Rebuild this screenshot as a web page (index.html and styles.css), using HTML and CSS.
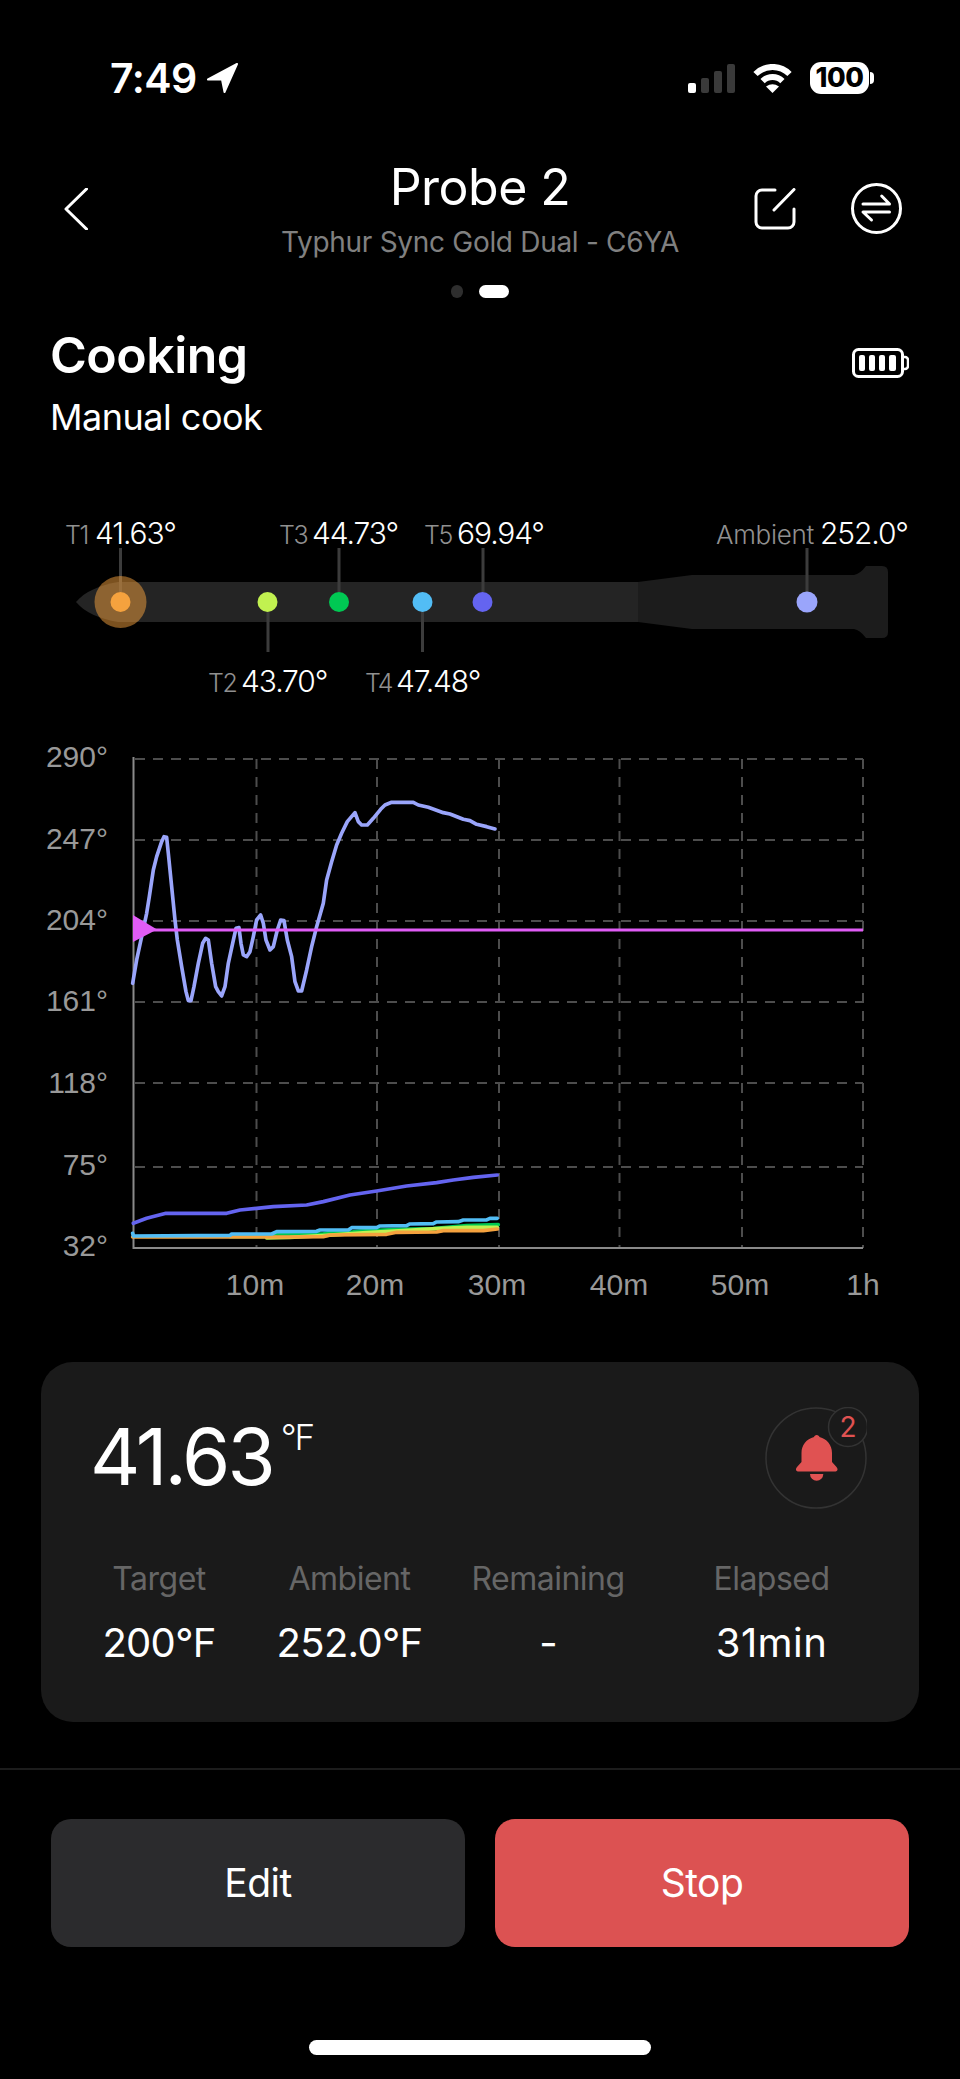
FILE: index.html
```html
<!DOCTYPE html>
<html lang="en">
<head>
    <meta charset="UTF-8">
    <title>Probe 2</title>
    <link rel="stylesheet" href="styles.css">
</head>
<body>
    <div class="screen">
        <!-- Status bar -->
        <div class="status-bar">
            <div class="status-left">
                <span class="clock">7:49</span>
                <svg class="location" viewBox="0 0 31 30"><path d="M30 1 L1 16.5 H15 L17.5 29 Z" fill="#fff" stroke="#fff" stroke-width="2" stroke-linejoin="round"/></svg>
            </div>
            <div class="status-right">
                <div class="signal">
                    <span class="bar bar-1"></span>
                    <span class="bar bar-2"></span>
                    <span class="bar bar-3"></span>
                    <span class="bar bar-4"></span>
                </div>
                <svg class="wifi" viewBox="0 0 41 29">
                    <path d="M3.5 10 A24 24 0 0 1 37.5 10" fill="none" stroke="#fff" stroke-width="6"/>
                    <path d="M10.6 17.1 A14 14 0 0 1 30.4 17.1" fill="none" stroke="#fff" stroke-width="6"/>
                    <path d="M20.5 29 L14 22.5 Q20.5 18 27 22.5 Z" fill="#fff"/>
                </svg>
                <div class="batt">100</div>
            </div>
        </div>

        <!-- Header -->
        <div class="header">
            <svg class="back" viewBox="0 0 24 42"><path d="M22.5 1 L2 21 L22.5 41" fill="none" stroke="#fff" stroke-width="3" stroke-linecap="round" stroke-linejoin="round"/></svg>
            <div class="header-title">
                <div class="title">Probe 2</div>
                <div class="subtitle">Typhur Sync Gold Dual - C6YA</div>
            </div>
            <div class="header-actions">
                <svg class="edit" viewBox="0 0 42 42">
                    <path d="M21 2 H8 A6 6 0 0 0 2 8 V34 A6 6 0 0 0 8 40 H34 A6 6 0 0 0 40 34 V21" fill="none" stroke="#fff" stroke-width="3" stroke-linecap="round"/>
                    <path d="M20 22 L40 1.5" fill="none" stroke="#fff" stroke-width="3" stroke-linecap="round"/>
                </svg>
                <svg class="swap" viewBox="0 0 51 51">
                    <circle cx="25.5" cy="25.5" r="24" fill="none" stroke="#fff" stroke-width="3"/>
                    <path d="M12 21 H38.5 L30.7 13" fill="none" stroke="#fff" stroke-width="3" stroke-linecap="round" stroke-linejoin="round"/>
                    <path d="M38.5 29 H12 L20.5 37" fill="none" stroke="#fff" stroke-width="3" stroke-linecap="round" stroke-linejoin="round"/>
                </svg>
            </div>
        </div>

        <div class="pager">
            <span class="pager-dot"></span>
            <span class="pager-dot active"></span>
        </div>

        <!-- Cook state -->
        <div class="state">
            <div>
                <div class="state-title">Cooking</div>
                <div class="state-sub">Manual cook</div>
            </div>
            <svg class="probe-battery" viewBox="0 0 57 30">
                <rect x="1.5" y="1.5" width="49" height="27" rx="5" fill="none" stroke="#fff" stroke-width="3"/>
                <path d="M50 9 h3 a3 3 0 0 1 3 3 v6 a3 3 0 0 1 -3 3 h-3" fill="none" stroke="#fff" stroke-width="2.5"/>
                <rect x="7" y="7" width="6" height="16" rx="2" fill="#fff"/>
                <rect x="17" y="7" width="6" height="16" rx="2" fill="#fff"/>
                <rect x="27" y="7" width="6" height="16" rx="2" fill="#fff"/>
                <rect x="37" y="7" width="7" height="16" rx="2" fill="#fff"/>
            </svg>
        </div>

        <!-- Probe diagram -->
        <svg class="probe" viewBox="0 500 960 220">
            <path class="probe-handle" d="M638 582 L692 575 H854 Q860 574 866 566 H882 Q888 566 888 572 V632 Q888 638 882 638 H866 Q860 630 854 629 H692 L638 622 Z"/>
            <path class="probe-shaft" d="M76 602 C84 592 100 585 118 582 H638 V622 H118 C100 619 84 612 76 602 Z"/>

            <line class="lead" x1="120.5" y1="548" x2="120.5" y2="592"/>
            <line class="lead" x1="268" y1="610" x2="268" y2="652"/>
            <line class="lead" x1="339" y1="548" x2="339" y2="592"/>
            <line class="lead" x1="422.5" y1="610" x2="422.5" y2="652"/>
            <line class="lead" x1="483" y1="548" x2="483" y2="592"/>
            <line class="lead" x1="807" y1="548" x2="807" y2="592"/>

            <circle class="halo" cx="120.5" cy="602" r="26"/>
            <circle cx="120.5" cy="602" r="10" fill="#f5a23e"/>
            <circle cx="267.5" cy="602" r="10" fill="#c1f150"/>
            <circle cx="339" cy="602" r="10" fill="#00c853"/>
            <circle cx="422.5" cy="602" r="10" fill="#52bdf5"/>
            <circle cx="482.5" cy="602" r="10" fill="#6464f0"/>
            <circle cx="807" cy="602" r="10.5" fill="#9aa5fb"/>

            <text y="544"><tspan class="probe-name" x="65">T1</tspan><tspan class="probe-val" x="95">41.63°</tspan></text>
            <text y="544"><tspan class="probe-name" x="279">T3</tspan><tspan class="probe-val" x="312">44.73°</tspan></text>
            <text y="544"><tspan class="probe-name" x="424">T5</tspan><tspan class="probe-val" x="457">69.94°</tspan></text>
            <text y="544"><tspan class="probe-name wide" x="716">Ambient</tspan><tspan class="probe-val" x="820">252.0°</tspan></text>
            <text y="692"><tspan class="probe-name" x="208">T2</tspan><tspan class="probe-val" x="241">43.70°</tspan></text>
            <text y="692"><tspan class="probe-name" x="365">T4</tspan><tspan class="probe-val" x="396">47.48°</tspan></text>
        </svg>

        <!-- Temperature chart -->
        <svg class="chart" viewBox="0 730 960 580">
            <g class="grid">
                <line x1="135" y1="759" x2="863" y2="759"/>
                <line x1="135" y1="840" x2="863" y2="840"/>
                <line x1="135" y1="921" x2="863" y2="921"/>
                <line x1="135" y1="1002" x2="863" y2="1002"/>
                <line x1="135" y1="1083" x2="863" y2="1083"/>
                <line x1="135" y1="1167" x2="863" y2="1167"/>
                <line x1="256.5" y1="759" x2="256.5" y2="1248"/>
                <line x1="377" y1="759" x2="377" y2="1248"/>
                <line x1="499" y1="759" x2="499" y2="1248"/>
                <line x1="619.5" y1="759" x2="619.5" y2="1248"/>
                <line x1="742" y1="759" x2="742" y2="1248"/>
                <line x1="863" y1="759" x2="863" y2="1248"/>
            </g>
            <path class="axis" d="M133.5 757 V1248 H863"/>

            <g class="ytick">
                <text x="108" y="767">290°</text>
                <text x="108" y="849">247°</text>
                <text x="108" y="930">204°</text>
                <text x="108" y="1011">161°</text>
                <text x="108" y="1093">118°</text>
                <text x="108" y="1175">75°</text>
                <text x="108" y="1256">32°</text>
            </g>
            <g class="xtick">
                <text x="255" y="1295">10m</text>
                <text x="375" y="1295">20m</text>
                <text x="497" y="1295">30m</text>
                <text x="619" y="1295">40m</text>
                <text x="740" y="1295">50m</text>
                <text x="863" y="1295">1h</text>
            </g>

            <g transform="translate(40 730) scale(0.3333)">
                <polyline class="curve ambient" points="278,760 290,690 305,620 320,550 328,500 340,420 350,380 365,335 372,320 380,322 385,370 395,470 405,570 412,630 425,710 438,785 445,812 453,812 462,770 475,700 488,640 497,625 505,630 515,700 527,770 535,785 545,798 555,770 565,700 578,640 588,595 597,593 603,640 610,675 620,680 630,665 640,620 650,570 662,555 670,580 678,630 690,660 700,650 712,600 722,570 732,572 742,630 755,680 765,755 775,783 785,783 800,720 815,650 830,590 850,520 860,450 875,395 890,345 905,310 922,275 945,248 955,275 965,285 982,285 1000,265 1022,238 1035,225 1055,217 1120,217 1135,225 1165,232 1210,248 1230,252 1270,268 1290,272 1310,283 1340,290 1365,297"/>
            </g>
            <g transform="translate(40 1030) scale(0.3333)">
                <polyline class="curve t5" points="280,580 320,565 378,550 560,550 600,540 650,535 700,530 800,525 850,515 930,495 1010,483 1100,468 1190,458 1240,450 1300,442 1372,435"/>
                <polyline class="curve t3" points="570,620 680,620 710,612 850,612 870,607 930,607 960,603 1080,598 1180,596 1280,587 1375,584"/>
                <polyline class="curve t2" points="680,624 750,622 860,616 980,608 1090,602 1190,596 1280,592 1372,592"/>
                <polyline class="curve t1" points="278,621 750,621 850,620 870,615 1040,613 1070,607 1190,606 1210,602 1330,602 1372,597"/>
                <polyline class="curve t4" points="278,610 280,618 570,616 575,612 695,612 710,605 830,604 840,600 925,600 935,593 1010,593 1020,588 1100,587 1110,582 1180,581 1190,576 1255,575 1270,570 1340,570 1350,565 1372,565"/>
            </g>

            <line class="target-line" x1="133" y1="930" x2="863" y2="930"/>
            <polygon class="target-mark" points="133,915 157,929.5 133,942"/>
        </svg>

        <!-- Reading card -->
        <div class="card">
            <div class="card-top">
                <div class="reading">
                    <span class="reading-value">41.63</span>
                    <span class="reading-unit">°F</span>
                </div>
                <svg class="alarm" viewBox="0 0 102 102">
                    <circle cx="51" cy="51" r="50" fill="none" stroke="#333" stroke-width="1.5"/>
                    <path d="M51.7 28 c1.5 0 2.5 1 2.8 2 C62 32 67 38 67 46 V55 L71.5 60 c2 2.5 1 4.5 -2 4.5 H34 c-3 0 -4 -2 -2 -4.5 L36.5 55 V46 C36.5 38 41.5 32 49 30 c0.3 -1 1.2 -2 2.7 -2 Z" fill="#e05252"/>
                    <path d="M45 67 h13.3 a6.65 6.65 0 0 1 -13.3 0 Z" fill="#e05252"/>
                    <circle cx="83" cy="20" r="19.5" fill="#1a1a1a" stroke="#333" stroke-width="1.5"/>
                    <text class="alarm-count" x="83" y="30">2</text>
                </svg>
            </div>
            <div class="stats">
                <div class="stat">
                    <div class="stat-label">Target</div>
                    <div class="stat-value">200°F</div>
                </div>
                <div class="stat">
                    <div class="stat-label">Ambient</div>
                    <div class="stat-value">252.0°F</div>
                </div>
                <div class="stat">
                    <div class="stat-label">Remaining</div>
                    <div class="stat-value">-</div>
                </div>
                <div class="stat">
                    <div class="stat-label">Elapsed</div>
                    <div class="stat-value stat-time">31min</div>
                </div>
            </div>
        </div>

        <!-- Actions -->
        <div class="actions">
            <button class="btn btn-edit">Edit</button>
            <button class="btn btn-stop">Stop</button>
        </div>

        <div class="home-indicator"></div>
    </div>
</body>
</html>
```

FILE: styles.css
```css
* {
    box-sizing: border-box;
}

body {
    margin: 0;
    background: #000;
    color: #fff;
    font-family: Inter, "Liberation Sans", sans-serif;
}

svg {
    display: block;
}

.screen {
    width: 960px;
    height: 2079px;
    overflow: hidden;
    display: flex;
    flex-direction: column;
}

/* status bar */
.status-bar {
    height: 156px;
    padding: 0 84px 0 110px;
    display: flex;
    justify-content: space-between;
    align-items: center;
}

.status-left,
.status-right {
    display: flex;
    align-items: center;
}

.clock {
    font-size: 41px;
    font-weight: 600;
    letter-spacing: -0.5px;
    line-height: 48px;
}

.location {
    width: 31px;
    height: 30px;
    margin-left: 10px;
}

.signal {
    display: flex;
    align-items: flex-end;
    gap: 5px;
    height: 29px;
}

.bar {
    width: 8px;
    border-radius: 2px;
    background: #3a3a3a;
}

.bar-1 {
    height: 10px;
    background: #fff;
}

.bar-2 {
    height: 15px;
}

.bar-3 {
    height: 22px;
}

.bar-4 {
    height: 29px;
}

.wifi {
    width: 41px;
    height: 29px;
    margin-left: 17px;
}

.batt {
    position: relative;
    width: 59px;
    height: 32px;
    margin-left: 17px;
    margin-right: 7px;
    border-radius: 11px;
    background: #fff;
    color: #000;
    font-size: 27px;
    font-weight: 800;
    line-height: 32px;
    text-align: center;
    letter-spacing: -0.5px;
}

.batt::after {
    content: "";
    position: absolute;
    top: 10px;
    right: -5px;
    width: 4px;
    height: 12px;
    border-radius: 0 4px 4px 0;
    background: #fff;
}

/* header */
.header {
    height: 101px;
    margin-top: 2px;
    padding: 0 58px;
    display: grid;
    grid-template-columns: 1fr auto 1fr;
    align-items: center;
}

.back {
    width: 24px;
    height: 42px;
    margin-left: 6px;
}

.header-title {
    text-align: center;
}

.title {
    font-size: 50px;
    font-weight: 400;
    line-height: 58px;
    letter-spacing: -0.5px;
}

.subtitle {
    margin-top: 10px;
    font-size: 28px;
    line-height: 33px;
    color: #808080;
    letter-spacing: -0.3px;
}

.header-actions {
    display: flex;
    justify-content: flex-end;
    align-items: center;
    gap: 55px;
}

.edit {
    width: 42px;
    height: 42px;
}

.swap {
    width: 51px;
    height: 51px;
}

.pager {
    margin-top: 26px;
    display: flex;
    justify-content: center;
    gap: 16px;
}

.pager-dot {
    width: 12px;
    height: 13px;
    border-radius: 7px;
    background: #2e2e2e;
}

.pager-dot.active {
    width: 30px;
    background: #fff;
}

/* cook state */
.state {
    margin-top: 27px;
    padding: 0 51px 0 50px;
    display: flex;
    justify-content: space-between;
    align-items: flex-start;
}

.state-title {
    font-size: 50px;
    font-weight: 600;
    line-height: 60px;
    letter-spacing: -0.5px;
}

.state-sub {
    margin-top: 10px;
    font-size: 36px;
    line-height: 44px;
    letter-spacing: -0.5px;
}

.probe-battery {
    width: 57px;
    height: 30px;
    margin-top: 23px;
}

/* probe diagram */
.probe {
    position: absolute;
    top: 500px;
    left: 0;
    width: 960px;
    height: 220px;
}

.probe-handle {
    fill: #1c1c1c;
}

.probe-shaft {
    fill: #242424;
}

.lead {
    stroke: #3c3c3c;
    stroke-width: 3;
}

.halo {
    fill: #f5a23e;
    opacity: 0.5;
}

.probe-name {
    font-size: 25px;
    font-weight: 300;
    fill: #909090;
    letter-spacing: -1.5px;
}

.probe-name.wide {
    font-size: 26px;
    letter-spacing: -0.3px;
}

.probe-val {
    font-size: 30px;
    font-weight: 300;
    fill: #fff;
    letter-spacing: -1.1px;
}

/* chart */
.chart {
    position: absolute;
    top: 730px;
    left: 0;
    width: 960px;
    height: 580px;
}

.grid line {
    stroke: #4d4d4d;
    stroke-width: 2;
    stroke-dasharray: 10 8;
}

.axis {
    fill: none;
    stroke: #8a8a8a;
    stroke-width: 2;
}

.ytick text {
    font-family: "Liberation Sans", sans-serif;
    font-size: 30px;
    fill: #999;
    text-anchor: end;
}

.xtick text {
    font-family: "Liberation Sans", sans-serif;
    font-size: 30px;
    fill: #999;
    text-anchor: middle;
}

.curve {
    fill: none;
    stroke-width: 11;
    stroke-linejoin: round;
    stroke-linecap: round;
}

.ambient {
    stroke: #9aa5fb;
}

.t1 {
    stroke: #f5a23e;
}

.t2 {
    stroke: #c1f150;
}

.t3 {
    stroke: #00c853;
}

.t4 {
    stroke: #52bdf5;
}

.t5 {
    stroke: #6464f0;
}

.target-line {
    stroke: #e05cf5;
    stroke-width: 3;
}

.target-mark {
    fill: #e05cf5;
}

/* reading card */
.card {
    position: absolute;
    top: 1362px;
    left: 41px;
    width: 878px;
    height: 360px;
    padding: 45px 20px 0 49px;
    border-radius: 32px;
    background: #1a1a1a;
}

.card-top {
    padding-right: 32px;
    display: flex;
    justify-content: space-between;
    align-items: flex-start;
}

.reading {
    display: flex;
    align-items: flex-start;
}

.reading-value {
    font-size: 78px;
    line-height: 100px;
    letter-spacing: -3px;
}

.reading-unit {
    margin-left: 8px;
    font-size: 35px;
    font-weight: 300;
    line-height: 60px;
    letter-spacing: -2px;
}

.alarm {
    width: 102px;
    height: 102px;
}

.alarm-count {
    font-size: 28px;
    fill: #e05252;
    text-anchor: middle;
}

.stats {
    margin-top: 50px;
    margin-left: -7.5px;
    display: grid;
    grid-template-columns: 153px 180px 169px 230px;
    column-gap: 24px;
    text-align: center;
}

.stat-label {
    font-size: 32px;
    line-height: 40px;
    color: #666;
    letter-spacing: -0.5px;
    white-space: nowrap;
}

.stat-value {
    margin-top: 21px;
    font-size: 40px;
    line-height: 46px;
    letter-spacing: -0.7px;
    white-space: nowrap;
}

.stat-time {
    letter-spacing: 0.4px;
}

/* bottom actions */
.actions {
    position: absolute;
    top: 1768px;
    left: 0;
    width: 960px;
    padding: 49px 51px 0;
    border-top: 2px solid #1c1c1c;
    display: flex;
    gap: 30px;
}

.btn {
    flex: 1;
    height: 128px;
    padding: 0 0 2px;
    border: none;
    border-radius: 20px;
    color: #fff;
    font-family: inherit;
    font-size: 39px;
    letter-spacing: -0.5px;
}

.btn-edit {
    background: #2b2b2d;
}

.btn-stop {
    background: #dc5252;
}

.home-indicator {
    position: absolute;
    top: 2040px;
    left: 309px;
    width: 342px;
    height: 15px;
    border-radius: 8px;
    background: #fff;
}
```
